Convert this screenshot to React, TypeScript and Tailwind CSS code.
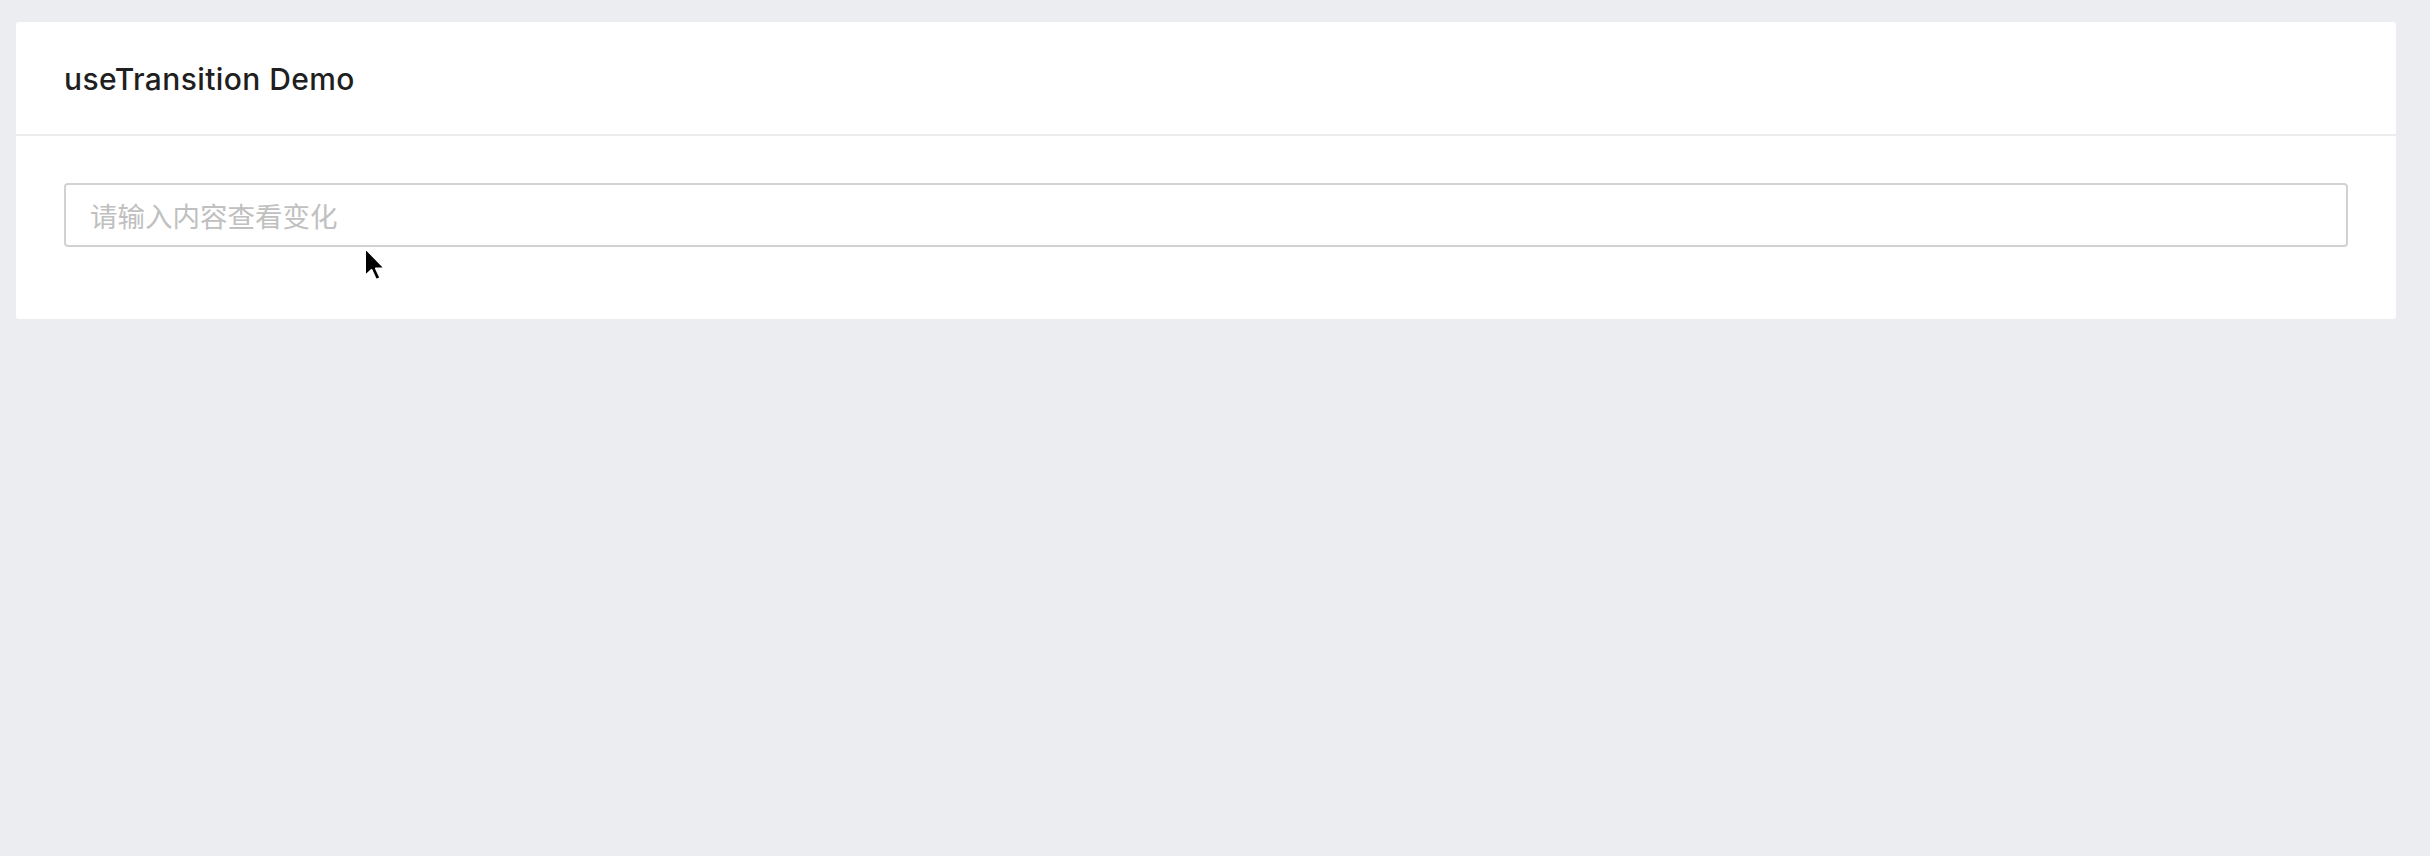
import React from "react";

export default function App() {
  return (
    <div className="relative h-[856px] w-full bg-[#ecedf1] pt-[22px] pl-[16px] font-['Inter','Noto_Sans_CJK_SC',sans-serif]">
      <div className="w-[2380px] rounded-[3px] bg-white">
        <div className="flex h-[114px] items-center border-b-2 border-[#ececec] px-[48px] pt-[3px]">
          <h1 className="text-[30px] font-medium text-[#1f1f1f] tracking-[0.4px]">useTransition Demo</h1>
        </div>
        <div className="px-[48px] pt-[47px] pb-[72px]">
          <input
            type="text"
            placeholder="请输入内容查看变化"
            className="block h-[64px] w-full rounded-[4px] border-2 border-[#d2d2d2] pl-[24px] text-[27.5px] text-[#333] outline-none placeholder:text-[#c0c0c0] font-['Noto_Sans_CJK_SC',sans-serif]"
          />
        </div>
      </div>
      <svg
        className="absolute left-[362px] top-[246px]"
        width="28"
        height="38"
        viewBox="0 0 28 38"
      >
        <path
          d="M3 2 L3 30 L9.5 24 L14 34 L18.5 32 L14 22.5 L23 22.5 Z"
          fill="#000"
          stroke="#fff"
          strokeWidth="2"
          strokeLinejoin="round"
        />
      </svg>
    </div>
  );
}
